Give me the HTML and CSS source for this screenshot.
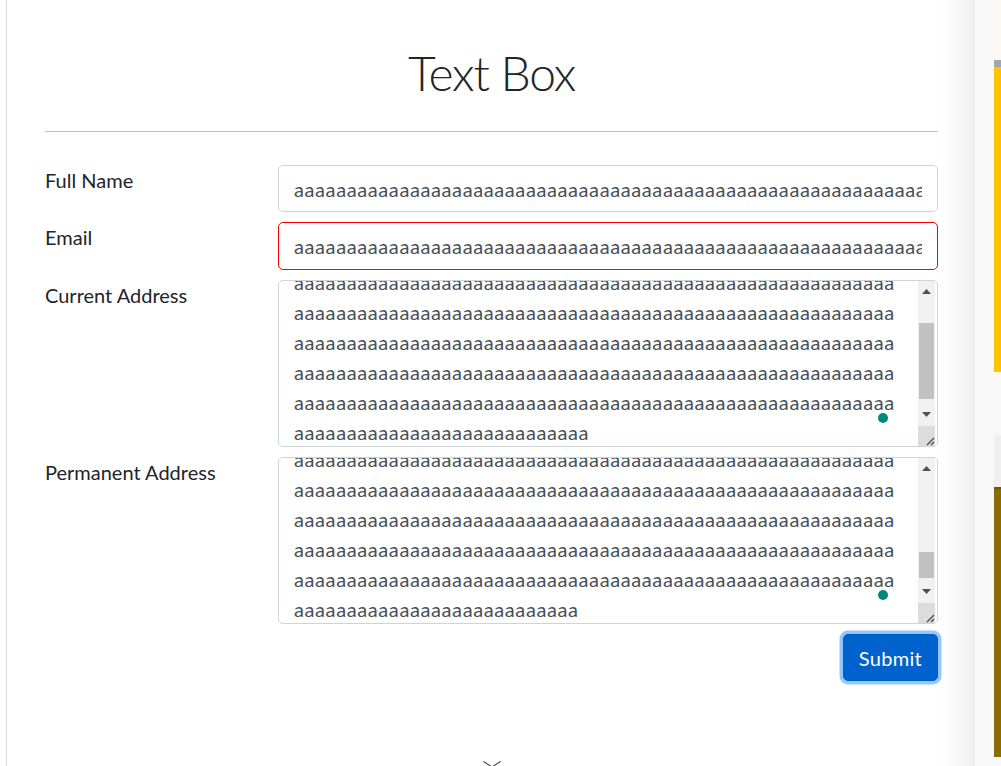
FILE: index.html
```html
<!DOCTYPE html>
<html lang="en">
<head>
<meta charset="utf-8">
<title>Text Box</title>
<link rel="stylesheet" href="styles.css">
</head>
<body>
<div class="page">
  <div class="rail"></div>
  <main class="main">
    <h1 class="title">Text Box</h1>
    <hr class="rule">
    <form class="form">
      <div class="row">
        <label class="label">Full Name</label>
        <input class="field" type="text" value="aaaaaaaaaaaaaaaaaaaaaaaaaaaaaaaaaaaaaaaaaaaaaaaaaaaaaaaaaaaaaaaaaaaaaaaaaaaaaaaa">
      </div>
      <div class="row">
        <label class="label">Email</label>
        <input class="field field-error" type="text" value="aaaaaaaaaaaaaaaaaaaaaaaaaaaaaaaaaaaaaaaaaaaaaaaaaaaaaaaaaaaaaaaaaaaaaaaaaaaaaaaa">
      </div>
      <div class="row">
        <label class="label">Current Address</label>
        <div class="area">
          <div class="area-text">
            <div class="lines">
              <p class="line">aaaaaaaaaaaaaaaaaaaaaaaaaaaaaaaaaaaaaaaaaaaaaaaaaaaaaaaaa</p>
              <p class="line">aaaaaaaaaaaaaaaaaaaaaaaaaaaaaaaaaaaaaaaaaaaaaaaaaaaaaaaaa</p>
              <p class="line">aaaaaaaaaaaaaaaaaaaaaaaaaaaaaaaaaaaaaaaaaaaaaaaaaaaaaaaaa</p>
              <p class="line">aaaaaaaaaaaaaaaaaaaaaaaaaaaaaaaaaaaaaaaaaaaaaaaaaaaaaaaaa</p>
              <p class="line">aaaaaaaaaaaaaaaaaaaaaaaaaaaaaaaaaaaaaaaaaaaaaaaaaaaaaaaaa</p>
              <p class="line">aaaaaaaaaaaaaaaaaaaaaaaaaaaa</p>
            </div>
          </div>
          <div class="bar">
            <div class="bar-btn"><svg width="9" height="5" viewBox="0 0 9 5"><path d="M0 5 L4.5 0 L9 5 Z" fill="#505050"/></svg></div>
            <div class="track"><div class="thumb thumb-cur"></div></div>
            <div class="bar-btn"><svg width="9" height="5" viewBox="0 0 9 5"><path d="M0 0 L9 0 L4.5 5 Z" fill="#505050"/></svg></div>
            <div class="corner"><svg width="10" height="10" viewBox="0 0 10 10"><path d="M9 2 L2 9 M9 6 L6 9" stroke="#444" stroke-width="1.2" fill="none"/></svg></div>
          </div>
          <span class="dot"></span>
        </div>
      </div>
      <div class="row">
        <label class="label">Permanent Address</label>
        <div class="area">
          <div class="area-text">
            <div class="lines">
              <p class="line">aaaaaaaaaaaaaaaaaaaaaaaaaaaaaaaaaaaaaaaaaaaaaaaaaaaaaaaaa</p>
              <p class="line">aaaaaaaaaaaaaaaaaaaaaaaaaaaaaaaaaaaaaaaaaaaaaaaaaaaaaaaaa</p>
              <p class="line">aaaaaaaaaaaaaaaaaaaaaaaaaaaaaaaaaaaaaaaaaaaaaaaaaaaaaaaaa</p>
              <p class="line">aaaaaaaaaaaaaaaaaaaaaaaaaaaaaaaaaaaaaaaaaaaaaaaaaaaaaaaaa</p>
              <p class="line">aaaaaaaaaaaaaaaaaaaaaaaaaaaaaaaaaaaaaaaaaaaaaaaaaaaaaaaaa</p>
              <p class="line">aaaaaaaaaaaaaaaaaaaaaaaaaaa</p>
            </div>
          </div>
          <div class="bar">
            <div class="bar-btn"><svg width="9" height="5" viewBox="0 0 9 5"><path d="M0 5 L4.5 0 L9 5 Z" fill="#505050"/></svg></div>
            <div class="track"><div class="thumb thumb-perm"></div></div>
            <div class="bar-btn"><svg width="9" height="5" viewBox="0 0 9 5"><path d="M0 0 L9 0 L4.5 5 Z" fill="#505050"/></svg></div>
            <div class="corner"><svg width="10" height="10" viewBox="0 0 10 10"><path d="M9 2 L2 9 M9 6 L6 9" stroke="#444" stroke-width="1.2" fill="none"/></svg></div>
          </div>
          <span class="dot"></span>
        </div>
      </div>
      <div class="actions">
        <button class="btn" type="button">Submit</button>
      </div>
    </form>
    <div class="chev"><svg width="18" height="8" viewBox="0 0 18 8"><polyline points="0.5,0.5 9,6 17.5,0.5" fill="none" stroke="#444" stroke-width="1.1"/></svg></div>
  </main>
  <aside class="side">
    <div class="ads">
      <div class="ad-cream"></div>
      <div class="ad-gray"></div>
      <div class="ad-yellow"></div>
      <div class="ad-gap"></div>
      <div class="ad-light"></div>
      <div class="ad-olive"></div>
    </div>
  </aside>
</div>
</body>
</html>
```

FILE: styles.css
```css
* { box-sizing: border-box; }
html, body {
  margin: 0;
  padding: 0;
  height: 766px;
  overflow: hidden;
  background: #fff;
}
body {
  font-family: Lato, "Open Sans", sans-serif;
  color: #212529;
}
.page {
  display: flex;
  height: 766px;
}
.rail {
  flex: 0 0 7px;
  border-right: 1px solid #dcdcdc;
}
.main {
  flex: 0 0 968px;
  padding: 42.6px 37px 0 38px;
  background: linear-gradient(to right, #fff 0, #fff calc(100% - 36px), #f3f3f3 calc(100% - 6px), #eeeeee 100%);
}
.title {
  margin: 0;
  font-size: 48px;
  line-height: 60px;
  font-weight: 300;
  letter-spacing: -1.2px;
  text-align: center;
  color: #212529;
}
.rule {
  margin: 28.4px 0 0;
  border: 0;
  border-top: 1px solid #bdbdbd;
  height: 0;
}
.form {
  margin-top: 33px;
  display: flex;
  flex-direction: column;
  gap: 10px;
}
.row {
  display: grid;
  grid-template-columns: 195px 660px;
  column-gap: 38px;
  align-items: start;
}
.label {
  font-size: 20px;
  line-height: 30px;
  color: #212529;
}
.field {
  display: block;
  width: 660px;
  height: 47.5px;
  margin: 0;
  padding: 0 15px;
  border: 1px solid #ced4da;
  border-radius: 5px;
  font-family: Lato, "Open Sans", sans-serif;
  font-size: 20px;
  letter-spacing: 0.6px;
  color: #495057;
  background: #fff;
  outline: none;
}
.field-error {
  border-color: #ff0000;
}
.area {
  position: relative;
  display: flex;
  height: 167px;
  border: 1px solid #ced4da;
  border-radius: 5px;
  background: #fff;
  overflow: hidden;
}
.area-text {
  flex: 1;
  overflow: hidden;
  padding-left: 15px;
}
.lines {
  margin-top: -13.7px;
}
.line {
  margin: 0;
  font-size: 20px;
  line-height: 30px;
  letter-spacing: 0.6px;
  white-space: nowrap;
  color: #495057;
}
.bar {
  flex: 0 0 17px;
  margin-right: 2px;
  display: flex;
  flex-direction: column;
  background: #f1f1f1;
}
.bar-btn {
  flex: 0 0 22px;
  display: flex;
  align-items: center;
  justify-content: center;
}
.track {
  flex: 1;
}
.thumb {
  margin: 0 1px;
  background: #c1c1c1;
}
.thumb-cur { margin-top: 20px; height: 76px; }
.thumb-perm { margin-top: 72px; height: 26px; }
.corner {
  flex: 0 0 20px;
  background: #dcdcdc;
  display: flex;
  align-items: flex-end;
  justify-content: flex-end;
}
.dot {
  position: absolute;
  left: 599px;
  top: 131.7px;
  width: 10px;
  height: 10px;
  border-radius: 50%;
  background: #00897b;
}
.actions {
  display: flex;
  justify-content: flex-end;
}
.btn {
  height: 47.5px;
  padding: 0 15px;
  border: 1px solid #005cbf;
  border-radius: 5px;
  background: #0062cc;
  color: #fff;
  font-family: Lato, "Open Sans", sans-serif;
  font-size: 20px;
  line-height: 30px;
  letter-spacing: 0.3px;
  box-shadow: 0 0 0 3.5px rgba(38, 143, 255, 0.5);
  cursor: pointer;
}
.chev {
  margin-top: 80px;
  display: flex;
  justify-content: center;
  padding-left: 1px;
}
.chev svg { display: block; }
.side {
  flex: 1;
  background: #f8f8f8;
}
.ads {
  margin-left: 19px;
  width: 7px;
  display: flex;
  flex-direction: column;
}
.ad-cream { height: 60px; background: #fcf8f1; }
.ad-gray { height: 7px; background: #9ea8a8; }
.ad-yellow { height: 305px; background: #fdc300; }
.ad-gap { height: 63px; }
.ad-light { height: 52px; background: #efefef; }
.ad-olive { height: 270px; background: #8a6c04; border-top: 2px solid #6e5600; }
```
